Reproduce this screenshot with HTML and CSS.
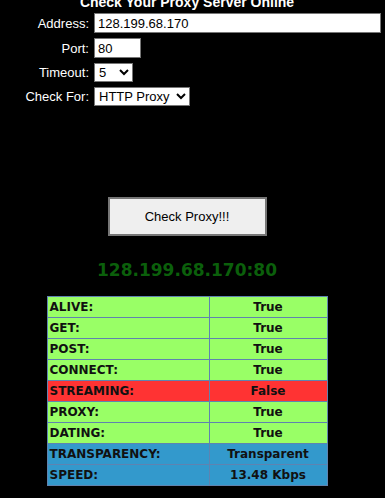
FILE: index.html
```html
<!DOCTYPE html>
<html lang="en">
  <head>
    <meta charset="UTF-8" />
    <title>Check Your Proxy Server Online</title>
    <link rel="stylesheet" href="styles.css">
  </head>
  <body>
    <div class="page">
      <h2 class="title">Check Your Proxy Server Online</h2>
      <form class="check-form">
        <div class="form-row">
          <label for="address">Address:</label>
          <input id="address" class="address" type="text" value="128.199.68.170" />
        </div>
        <div class="form-row">
          <label for="port">Port:</label>
          <input id="port" class="port" type="text" value="80" />
        </div>
        <div class="form-row">
          <label for="timeout">Timeout:</label>
          <select id="timeout" class="timeout">
            <option>5</option>
            <option>10</option>
            <option>20</option>
          </select>
        </div>
        <div class="form-row">
          <label for="type">Check For:</label>
          <select id="type" class="type">
            <option>HTTP Proxy</option>
            <option>SOCKS4</option>
            <option>SOCKS5</option>
          </select>
        </div>
        <div class="submit-row">
          <button type="button" class="check-btn">Check Proxy!!!</button>
        </div>
      </form>

      <div class="target">128.199.68.170:80</div>

      <table class="results">
        <tr class="ok"><td>ALIVE:</td><td>True</td></tr>
        <tr class="ok"><td>GET:</td><td>True</td></tr>
        <tr class="ok"><td>POST:</td><td>True</td></tr>
        <tr class="ok"><td>CONNECT:</td><td>True</td></tr>
        <tr class="fail"><td>STREAMING:</td><td>False</td></tr>
        <tr class="ok"><td>PROXY:</td><td>True</td></tr>
        <tr class="ok"><td>DATING:</td><td>True</td></tr>
        <tr class="info"><td>TRANSPARENCY:</td><td>Transparent</td></tr>
        <tr class="info"><td>SPEED:</td><td>13.48 Kbps</td></tr>
      </table>
    </div>
  </body>
</html>
```

FILE: styles.css
```css
body {
  margin: 0;
  background-color: #000;
  color: #fff;
  font-family: "Liberation Sans", Arial, sans-serif;
  font-size: 13px;
  overflow: hidden;
}

.page {
  width: 374px;
}

.title {
  margin: -5px 0 0 0;
  height: 13px;
  font-size: 14px;
  font-weight: bold;
  text-align: center;
  line-height: 15px;
}

.check-form {
  margin: 0;
}

.form-row {
  display: flex;
  align-items: center;
  margin-top: 5px;
}

.form-row label {
  flex: none;
  width: 89px;
  text-align: right;
  margin-right: 5px;
  font-size: 13px;
}

.form-row input,
.form-row select {
  flex: none;
  font-family: "Liberation Sans", Arial, sans-serif;
  font-size: 13px;
  color: #000;
  background-color: #fff;
  border: 1px solid #767676;
  box-sizing: border-box;
  margin: 0;
}

.address {
  width: 287px;
  height: 20px;
  padding: 1px 3px;
}

.port {
  width: 47px;
  height: 20px;
  padding: 1px 3px;
}

.timeout {
  width: 39px;
  height: 19px;
}

.type {
  width: 96px;
  height: 19px;
}

.submit-row {
  text-align: center;
  margin-top: 91px;
}

.check-btn {
  width: 159px;
  height: 39px;
  background-color: #efefef;
  border: 2px solid #767676;
  color: #000;
  font-family: "Liberation Sans", Arial, sans-serif;
  font-size: 13px;
}

.target {
  margin-top: 24px;
  text-align: center;
  color: #0b5f0b;
  font-family: "DejaVu Sans", Verdana, sans-serif;
  font-weight: bold;
  font-size: 17px;
  line-height: 20px;
}

.results {
  margin: 16px auto 0 auto;
  width: 281px;
  border-collapse: collapse;
  border: 1px solid #5f83b0;
  font-family: "DejaVu Sans", Verdana, sans-serif;
  font-weight: bold;
  font-size: 12px;
  color: #111;
}

.results td {
  border: 1px solid #5f83b0;
  height: 20px;
  padding: 0 2px;
}

.results td:first-child {
  width: 157px;
}

.results td:last-child {
  text-align: center;
}

.ok {
  background-color: #99ff66;
}

.fail {
  background-color: #ff3333;
}

.info {
  background-color: #3399cc;
}
```
